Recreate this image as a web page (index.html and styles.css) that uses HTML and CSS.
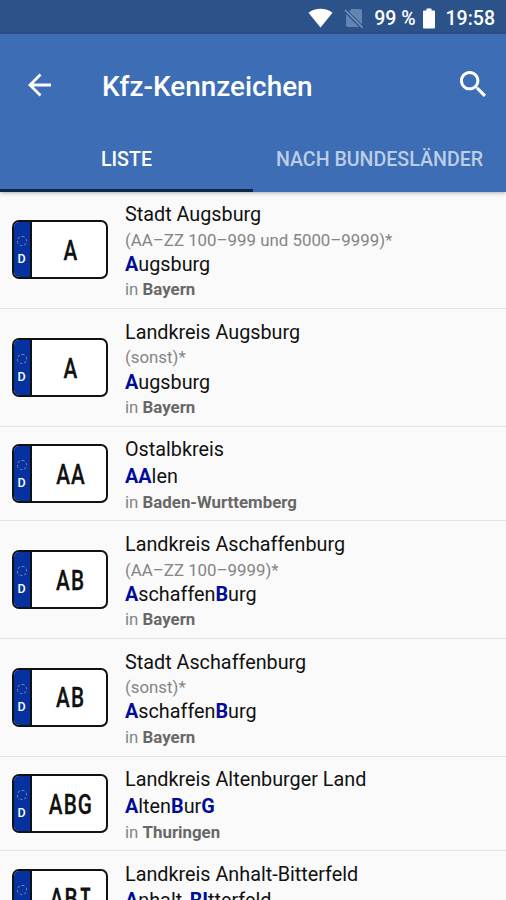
FILE: index.html
```html
<!DOCTYPE html>
<html lang="de">
<head>
    <meta charset="UTF-8">
    <meta name="viewport" content="width=device-width, initial-scale=1.0">
    <title>Kfz-Kennzeichen</title>
    <link rel="stylesheet" href="styles.css">
</head>
<body>
    <div class="statusbar">
        <svg class="wifi" viewBox="0 0 26 20"><path d="M13 20 L0.5 4.5 C7 -1 19 -1 25.5 4.5 Z" fill="#fff"/></svg>
        <svg class="nosim" viewBox="0 0 20 20"><path d="M7.500 1H16q2 0 2 2v13.500L5 3.500zM2 6v11q0 2 2 2h11z" fill="#6484b4"/><path d="M1 2l17.500 17.500" stroke="#7893bd" stroke-width="1.6"/></svg>
        <span class="percent">99 %</span>
        <svg class="battery" viewBox="0 0 12 20"><path d="M3.500 0h5v2H11q1 0 1 1v16q0 1-1 1H1q-1 0-1-1V3q0-1 1-1h2.500z" fill="#fff"/></svg>
        <span class="clock">19:58</span>
    </div>
    <header class="header">
        <div class="toolbar">
            <svg class="back" viewBox="0 0 24 24"><path d="M12.500 1.500L2 12l10.500 10.500M2.500 12H23" fill="none" stroke="#fff" stroke-width="2.800"/></svg>
            <h1>Kfz-Kennzeichen</h1>
            <svg class="search" viewBox="3 3 17.490 17.490"><path fill="#fff" d="M15.500 14h-.79l-.28-.27C15.410 12.590 16 11.110 16 9.500 16 5.910 13.090 3 9.500 3S3 5.910 3 9.500 5.910 16 9.500 16c1.610 0 3.090-.59 4.230-1.570l.27.28v.79l5 4.990L20.490 19l-4.990-5zm-6 0C7.010 14 5 11.990 5 9.500S7.010 5 9.500 5 14 7.010 14 9.500 11.990 14 9.500 14z"/></svg>
        </div>
        <nav class="tabs">
            <div class="tab active">LISTE</div>
            <div class="tab">NACH BUNDESLÄNDER</div>
        </nav>
    </header>
    <main class="list">
        <div class="row">
            <div class="plate"><div class="euro"><i class="stars"></i>D</div><div class="code"><span>A</span></div></div>
            <div class="info">
                <p class="title">Stadt Augsburg</p>
                <p class="sub">(AA–ZZ 100–999 und 5000–9999)*</p>
                <p class="name"><b>A</b>ugsburg</p>
                <p class="sub">in <b>Bayern</b></p>
            </div>
        </div>
        <div class="row">
            <div class="plate"><div class="euro"><i class="stars"></i>D</div><div class="code"><span>A</span></div></div>
            <div class="info">
                <p class="title">Landkreis Augsburg</p>
                <p class="sub">(sonst)*</p>
                <p class="name"><b>A</b>ugsburg</p>
                <p class="sub">in <b>Bayern</b></p>
            </div>
        </div>
        <div class="row">
            <div class="plate"><div class="euro"><i class="stars"></i>D</div><div class="code"><span>AA</span></div></div>
            <div class="info">
                <p class="title">Ostalbkreis</p>
                <p class="name"><b>AA</b>len</p>
                <p class="sub">in <b>Baden-Wurttemberg</b></p>
            </div>
        </div>
        <div class="row">
            <div class="plate"><div class="euro"><i class="stars"></i>D</div><div class="code"><span>AB</span></div></div>
            <div class="info">
                <p class="title">Landkreis Aschaffenburg</p>
                <p class="sub">(AA–ZZ 100–9999)*</p>
                <p class="name"><b>A</b>schaffen<b>B</b>urg</p>
                <p class="sub">in <b>Bayern</b></p>
            </div>
        </div>
        <div class="row">
            <div class="plate"><div class="euro"><i class="stars"></i>D</div><div class="code"><span>AB</span></div></div>
            <div class="info">
                <p class="title">Stadt Aschaffenburg</p>
                <p class="sub">(sonst)*</p>
                <p class="name"><b>A</b>schaffen<b>B</b>urg</p>
                <p class="sub">in <b>Bayern</b></p>
            </div>
        </div>
        <div class="row">
            <div class="plate"><div class="euro"><i class="stars"></i>D</div><div class="code"><span>ABG</span></div></div>
            <div class="info">
                <p class="title">Landkreis Altenburger Land</p>
                <p class="name"><b>A</b>lten<b>B</b>ur<b>G</b></p>
                <p class="sub">in <b>Thuringen</b></p>
            </div>
        </div>
        <div class="row">
            <div class="plate"><div class="euro"><i class="stars"></i>D</div><div class="code"><span>AB<em>I</em></span></div></div>
            <div class="info">
                <p class="title">Landkreis Anhalt-Bitterfeld</p>
                <p class="name"><b>A</b>nhalt-<b class="second">BI</b>tterfeld</p>
                <p class="sub">in <b>Sachsen-Anhalt</b></p>
            </div>
        </div>
    </main>
</body>
</html>
```

FILE: styles.css
```css
* {
    box-sizing: border-box;
}
body {
    margin: 0;
    height: 900px;
    overflow: hidden;
    display: flex;
    flex-direction: column;
    font-family: Roboto, "Liberation Sans", sans-serif;
    background-color: #fafafa;
    color: #111;
}
svg {
    display: block;
    flex: none;
}
.statusbar {
    flex: none;
    height: 34px;
    padding: 2px 11px 0 0;
    display: flex;
    align-items: center;
    justify-content: flex-end;
    background-color: #2c528a;
    color: #fff;
    font-size: 19.500px;
    font-weight: 500;
    white-space: nowrap;
}
.wifi {
    width: 25px;
    height: 20px;
}
.nosim {
    width: 20px;
    height: 20px;
    margin-left: 11px;
}
.percent {
    margin-left: 10px;
}
.battery {
    width: 12px;
    height: 21px;
    margin-left: 7px;
}
.clock {
    margin-left: 11px;
}
.header {
    flex: none;
    height: 157.500px;
    background-color: #3c6db5;
    color: #fff;
    box-shadow: 0 1px 4px rgba(0, 0, 0, 0.3);
    position: relative;
}
.toolbar {
    height: 102px;
    padding: 0 20px 0 28px;
    display: flex;
    align-items: center;
}
.back {
    width: 24px;
    height: 24px;
}
.toolbar h1 {
    flex: 1;
    margin: 2px 0 0 50px;
    font-size: 27.900px;
    font-weight: 500;
}
.search {
    width: 26px;
    height: 26px;
    margin-top: -3px;
}
.tabs {
    display: flex;
    height: 55.500px;
}
.tab {
    width: 50%;
    padding-top: 12px;
    text-align: center;
    font-size: 19.600px;
    line-height: 24px;
    font-weight: 500;
    color: #bccee7;
    white-space: nowrap;
}
.tab.active {
    color: #fff;
    border-bottom: 3px solid #0c2748;
}
.row {
    display: flex;
    align-items: center;
    padding: 10.600px 12px 6.500px;
    border-bottom: 1px solid #e2e2e2;
}
.plate {
    flex: none;
    width: 96px;
    height: 59px;
    margin-top: -4px;
    display: flex;
    border: 2px solid #111;
    border-radius: 7px;
    background-color: #fff;
    overflow: hidden;
}
.euro {
    width: 18px;
    display: flex;
    flex-direction: column;
    align-items: center;
    padding: 14px 1px 0 0;
    background-color: #0532a0;
    border-right: 2px solid #111;
    color: #fff;
    font-size: 12.500px;
    line-height: 15px;
    font-weight: 500;
}
.stars {
    flex: none;
    width: 10px;
    height: 10px;
    margin-bottom: 5px;
    border: 1px dashed #8a8c9c;
    border-radius: 50%;
}
.code {
    flex: 1;
    display: flex;
    align-items: center;
    justify-content: center;
    padding-top: 2px;
    font-size: 28px;
    line-height: 30px;
    font-weight: 500;
}
.code span {
    transform: scaleX(0.74);
    margin-left: 4px;
    letter-spacing: 1.500px;
    -webkit-text-stroke: 0.300px #111;
}
.code em {
    font-family: "Liberation Mono", monospace;
    font-size: 30px;
    line-height: 1;
    font-style: normal;
    font-weight: 400;
    -webkit-text-stroke: 1px #111;
}
.info {
    margin-left: 17px;
    white-space: nowrap;
}
.info p {
    margin: 0;
}
.info .title,
.info .name {
    font-size: 19.800px;
    line-height: 26.600px;
}
.name b {
    color: #000d9c;
    font-weight: 700;
}
.name .second {
    margin-left: 2px;
}
.info .sub {
    font-size: 16.850px;
    line-height: 23.200px;
    color: #858585;
}
.sub b {
    color: #686868;
    font-weight: 700;
}
```
